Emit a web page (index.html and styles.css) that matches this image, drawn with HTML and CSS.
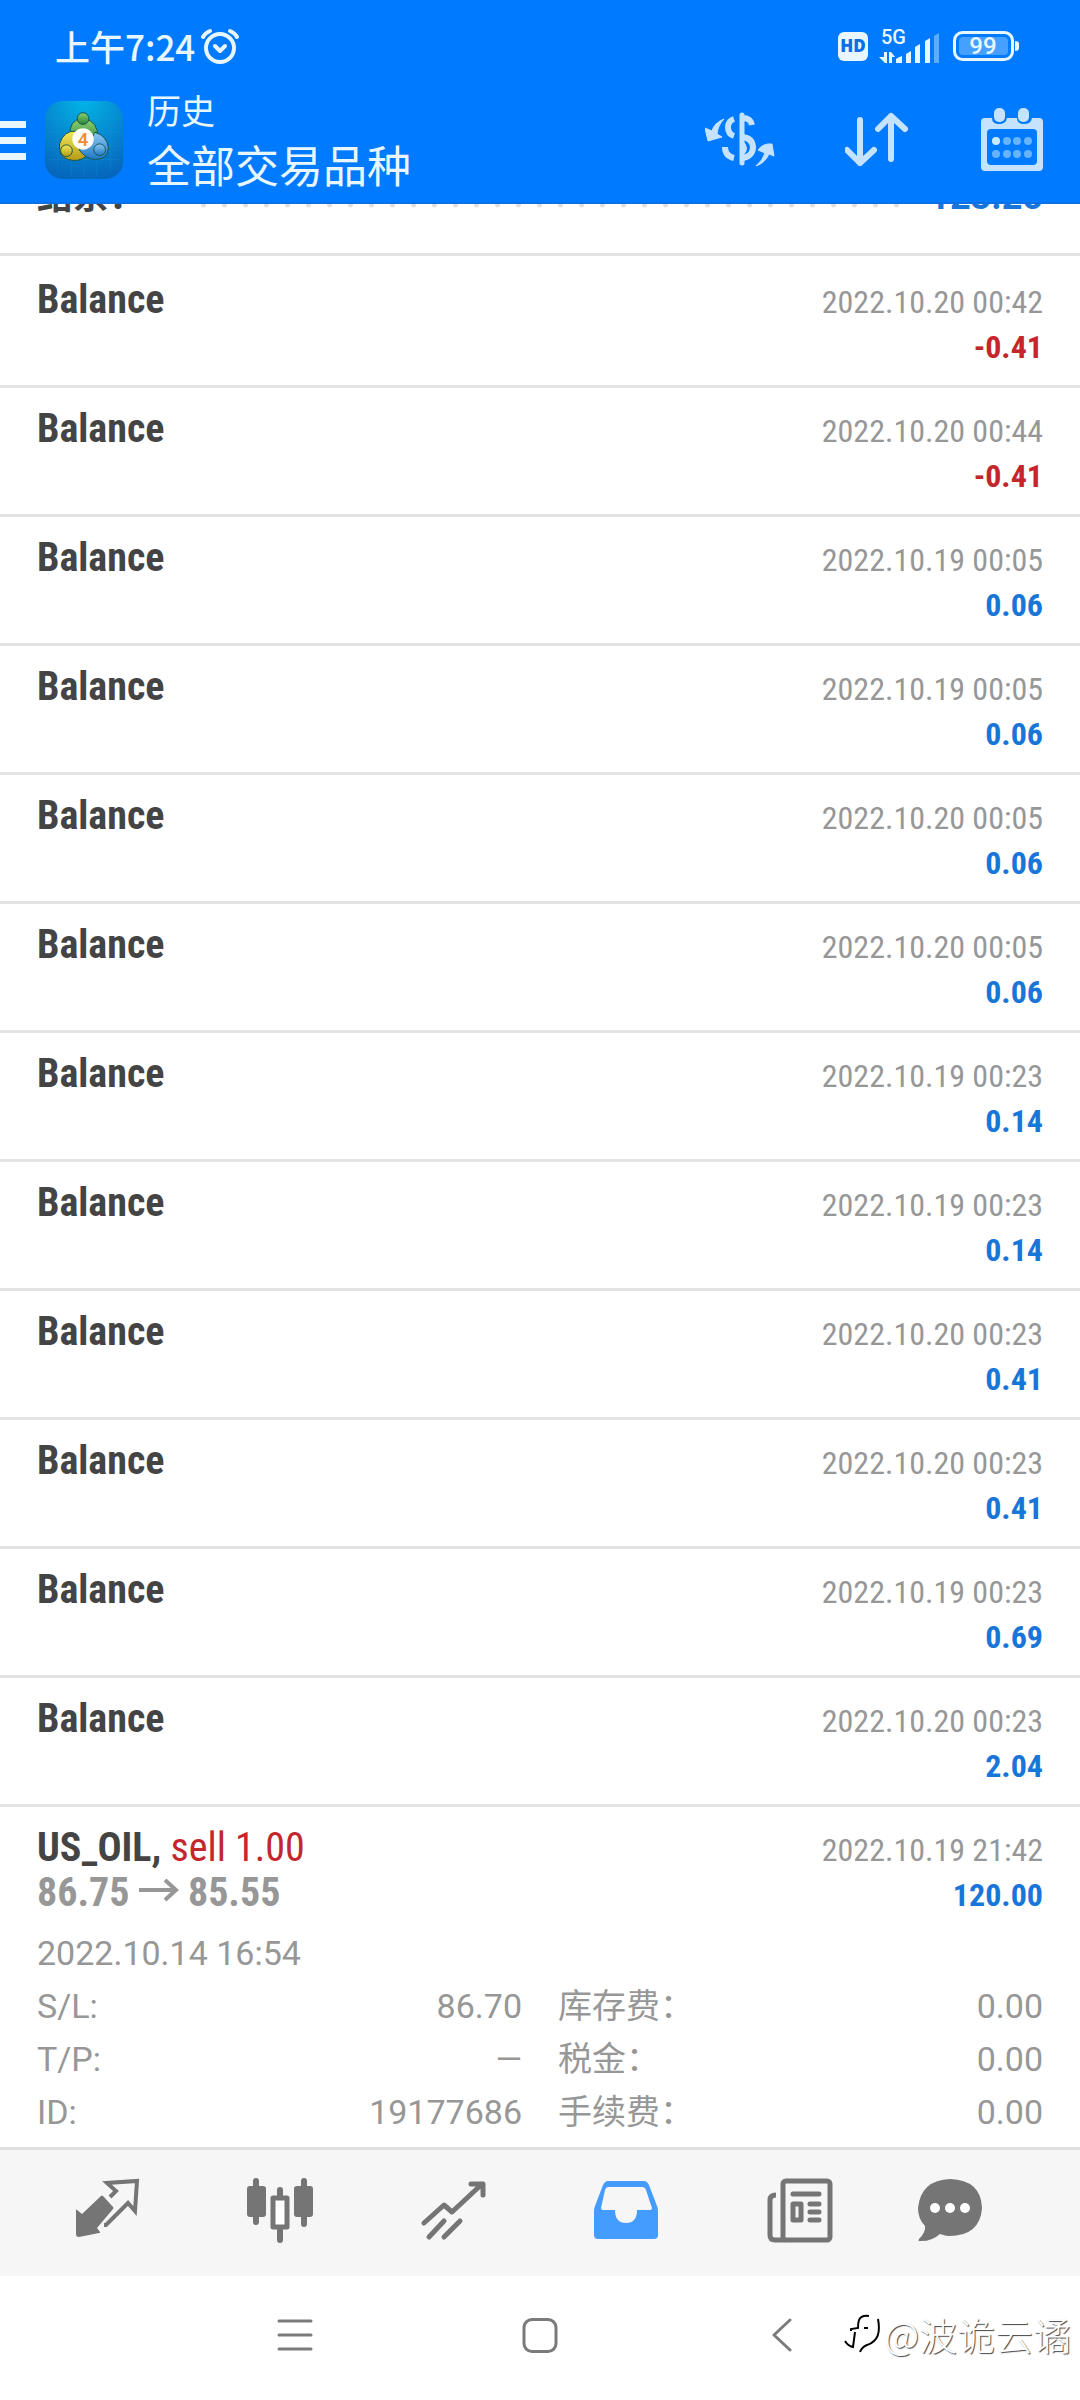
FILE: index.html
```html
<!DOCTYPE html>
<html lang="zh-CN">
<head>
<meta charset="utf-8">
<meta name="viewport" content="width=device-width, initial-scale=1">
<title>历史</title>
<link rel="stylesheet" href="styles.css">
</head>
<body>
<header class="header">
  <div class="status">
    <span class="clock">上午7:24</span>
    <svg class="alarm" width="40" height="38" viewBox="0 0 40 38" fill="none" stroke="currentColor" stroke-width="4" stroke-linecap="round"><circle cx="20" cy="21" r="14"/><path d="M3 10Q5 6 10 4M37 10Q35 6 30 4"/><path d="M15 19l5 5 5-5" stroke-linejoin="round"/></svg>
    <svg class="hd" width="30" height="30" viewBox="0 0 30 30"><rect width="30" height="29" y="1" rx="6" fill="currentColor"/><text x="15" y="21" text-anchor="middle" class="hd-text">HD</text></svg>
    <svg class="signal" width="62" height="42" viewBox="0 -4 62 42" fill="currentColor"><text x="2" y="15" class="signal-text">5G</text><path d="M5 23h3v11h-2l-6-6h5zM10 34V23h2l4 5h-3v6z"/><path d="M17 30q3-2 6-3v7h-6zM27 25l5-3v12h-5zM36 18l5-3v19h-5zM46 12l5-3v25h-5z"/><path d="M55 7l5-3v30h-5z" opacity=".4"/></svg>
    <svg class="battery" width="68" height="32" viewBox="0 0 68 32"><rect x="1.500" y="2.500" width="58" height="27" rx="8" fill="none" stroke="currentColor" stroke-width="3"/><rect x="6" y="7" width="49" height="18" rx="4" fill="currentColor" opacity=".3"/><path d="M62 11q4 0 4 3v4q0 3-4 3z" fill="currentColor"/><text x="30" y="24" text-anchor="middle" class="battery-text">99</text></svg>
  </div>
  <div class="toolbar">
    <button class="icon-button menu" aria-label="菜单"><svg width="26" height="40" viewBox="0 0 26 40" fill="currentColor"><path d="M0 1h26v7H0zM0 17h26v7H0zM0 33h26v7H0z"/></svg></button>
    <svg class="app-icon" width="78" height="78" viewBox="0 0 80 80">
      <defs>
        <radialGradient id="tile" cx=".5" cy="0" r="1"><stop offset="0" stop-color="#02b4e6"/><stop offset=".5" stop-color="#068ad2"/><stop offset="1" stop-color="#0567bb"/></radialGradient>
        <linearGradient id="green" x2="0" y2="1"><stop stop-color="#8fd070"/><stop offset="1" stop-color="#258336"/></linearGradient>
        <linearGradient id="yellow" x2="0" y2="1"><stop stop-color="#f3e85a"/><stop offset="1" stop-color="#b49a16"/></linearGradient>
        <linearGradient id="blue" x2="0" y2="1"><stop stop-color="#8cc9f5"/><stop offset="1" stop-color="#1f78c4"/></linearGradient>
      </defs>
      <rect width="80" height="80" rx="18" fill="url(#tile)"/>
      <path d="M13 8v64M27 3v74M40 2v76M53 3v74M67 8v64M4 18h72M2 32h76M2 46h76M4 60h72" stroke="#35b4e8" stroke-opacity=".15"/>
      <g stroke="#17544c"><path d="M26 35Q24 19 39 18Q55 20 54 38L44 46L34 34Z" fill="url(#green)"/><path d="M32 31Q19 30 15 44Q13 57 24 60Q34 63 42 57L34 47Z" fill="url(#yellow)"/><path d="M51 32Q64 36 65 48Q64 60 52 60Q42 60 35 50L46 44Z" fill="url(#blue)"/><circle cx="39" cy="18" r="6" fill="url(#green)"/><circle cx="22" cy="51" r="6" fill="url(#yellow)"/><circle cx="56" cy="50" r="6" fill="url(#blue)"/></g>
      <circle cx="39" cy="39" r="11" fill="#fffdf6"/><text x="39" y="46" text-anchor="middle" class="app-icon-text">4</text>
    </svg>
    <h1 class="titles"><span class="section">历史</span><span class="filter">全部交易品种</span></h1>
    <button class="icon-button" aria-label="货币"><svg width="70" height="64" viewBox="0 0 70 64" fill="none" stroke="currentColor" stroke-width="5"><path d="M37 7v48" stroke-linecap="round"/><path d="M29 11Q23 13 23 19Q23 26 29 28M29 50Q20 48 20 39M37 10Q46 10 47 17M37 29Q48 30 48 40Q47 49 37 50" stroke-width="6"/><path d="M38 35q5 6 0 10" stroke-width="3"/><path d="M19 11Q9 15 7 23L0 20L3 33L17 29L12 26Q13 17 19 11ZM51 58Q58 52 60 45L53 42Q58 35 67 36L69 48L64 46Q60 55 51 58Z" fill="currentColor" stroke="currentColor" stroke-width="1" stroke-linejoin="round"/></svg></button>
    <button class="icon-button" aria-label="排序"><svg width="66" height="64" viewBox="0 0 66 64" fill="none" stroke="currentColor" stroke-width="6" stroke-linecap="round" stroke-linejoin="round"><path d="M15 12v43M2 42l13 13 14-13M46 51V8M33 21L46 8l14 13"/></svg></button>
    <button class="icon-button" aria-label="日期"><svg width="62" height="64" viewBox="0 0 62 64"><path fill="currentColor" fill-rule="evenodd" d="M4 10H11Q11 16 18 16T26 10H36Q36 16 43 16T51 10H58Q62 10 62 14V59Q62 63 58 63H4Q0 63 0 59V14Q0 10 4 10ZM10 21Q6 21 6 25V53Q6 57 10 57H52Q56 57 56 53V25Q56 21 52 21Z"/><rect x="13" width="11" height="14" rx="5" fill="currentColor"/><rect x="37" width="11" height="14" rx="5" fill="currentColor"/><circle cx="15" cy="33" r="4" fill="#cbecff"/><g fill="#66b3ff"><circle cx="26" cy="33" r="4"/><circle cx="36" cy="33" r="4"/><circle cx="47" cy="33" r="4"/><circle cx="15" cy="46" r="4"/><circle cx="26" cy="46" r="4"/><circle cx="36" cy="46" r="4"/><circle cx="47" cy="46" r="4"/></g></svg></button>
  </div>
</header>

<main class="history">
  <div class="summary"><span>结余：</span><span class="leader"></span><span class="gain">123.25</span></div>
  <ul class="deals">
    <li class="deal"><p class="line"><strong>Balance</strong><time class="date">2022.10.20 00:42</time></p><p class="line"><b class="value loss">-0.41</b></p></li>
    <li class="deal"><p class="line"><strong>Balance</strong><time class="date">2022.10.20 00:44</time></p><p class="line"><b class="value loss">-0.41</b></p></li>
    <li class="deal"><p class="line"><strong>Balance</strong><time class="date">2022.10.19 00:05</time></p><p class="line"><b class="value gain">0.06</b></p></li>
    <li class="deal"><p class="line"><strong>Balance</strong><time class="date">2022.10.19 00:05</time></p><p class="line"><b class="value gain">0.06</b></p></li>
    <li class="deal"><p class="line"><strong>Balance</strong><time class="date">2022.10.20 00:05</time></p><p class="line"><b class="value gain">0.06</b></p></li>
    <li class="deal"><p class="line"><strong>Balance</strong><time class="date">2022.10.20 00:05</time></p><p class="line"><b class="value gain">0.06</b></p></li>
    <li class="deal"><p class="line"><strong>Balance</strong><time class="date">2022.10.19 00:23</time></p><p class="line"><b class="value gain">0.14</b></p></li>
    <li class="deal"><p class="line"><strong>Balance</strong><time class="date">2022.10.19 00:23</time></p><p class="line"><b class="value gain">0.14</b></p></li>
    <li class="deal"><p class="line"><strong>Balance</strong><time class="date">2022.10.20 00:23</time></p><p class="line"><b class="value gain">0.41</b></p></li>
    <li class="deal"><p class="line"><strong>Balance</strong><time class="date">2022.10.20 00:23</time></p><p class="line"><b class="value gain">0.41</b></p></li>
    <li class="deal"><p class="line"><strong>Balance</strong><time class="date">2022.10.19 00:23</time></p><p class="line"><b class="value gain">0.69</b></p></li>
    <li class="deal"><p class="line"><strong>Balance</strong><time class="date">2022.10.20 00:23</time></p><p class="line"><b class="value gain">2.04</b></p></li>
    <li class="deal trade">
      <p class="line"><span><strong>US_OIL,</strong> <span class="loss">sell 1.00</span></span><time class="date">2022.10.19 21:42</time></p>
      <p class="line"><strong class="prices">86.75 <svg class="arrow" role="img" aria-label="→" width="40" height="27" viewBox="0 0 40 27" fill="none" stroke="currentColor" stroke-width="4"><path d="M0 11h38M26 1l11 10-11 10"/></svg> 85.55</strong><b class="value gain">120.00</b></p>
      <div class="details">
        <time>2022.10.14 16:54</time>
        <dl class="fields">
          <div class="field"><dt>S/L:</dt><dd>86.70</dd></div>
          <div class="field"><dt>库存费：</dt><dd>0.00</dd></div>
          <div class="field"><dt>T/P:</dt><dd>—</dd></div>
          <div class="field"><dt>税金：</dt><dd>0.00</dd></div>
          <div class="field"><dt>ID:</dt><dd>19177686</dd></div>
          <div class="field"><dt>手续费：</dt><dd>0.00</dd></div>
        </dl>
      </div>
    </li>
  </ul>
</main>

<nav class="tabs" aria-label="主导航">
  <button class="tab" aria-label="行情"><svg width="70" height="70" viewBox="0 0 70 70" fill="none" stroke="currentColor" stroke-width="4"><path d="M4 32q0-1 1 0l5 4 19-18q1-1 2 0l10 11q1 1 0 2L25 50l3 4q1 1-1 1L7 59q-3 0-3-3z" fill="currentColor" stroke="none"/><path d="M38 19l6-6-9-8 30-2-2 30-7-8-22 22h-2"/></svg></button>
  <button class="tab" aria-label="图表"><svg width="70" height="70" viewBox="0 0 70 70" fill="none" stroke="currentColor" stroke-width="6" stroke-linecap="round"><rect x="2" y="8" width="19" height="31" rx="3" fill="currentColor" stroke="none"/><rect x="49" y="8" width="19" height="31" rx="3" fill="currentColor" stroke="none"/><path d="M11 3v41M59 3v43M35 12v7M35 52v10"/><rect x="28" y="20" width="14" height="29" stroke-width="5" fill="#fff" stroke-linejoin="round"/></svg></button>
  <button class="tab" aria-label="交易"><svg width="70" height="70" viewBox="0 0 70 70" fill="none" stroke="currentColor" stroke-width="5" stroke-linecap="round" stroke-linejoin="round"><path d="M6 45l20-18 8 7L64 6M53 6h12v11M11 59l15-16M26 59l16-16"/></svg></button>
  <button class="tab active" aria-label="历史" aria-current="page"><svg width="70" height="70" viewBox="0 0 70 70"><path fill="currentColor" d="M17 3h36q3 0 5 4l8 21q1 2 1 5v24q0 4-4 4H7q-4 0-4-4V33q0-3 1-5l8-21q2-4 5-4z"/><path fill="#f6f6f6" d="M17 9h34q3 0 4 3l6 18q0 2-2 2H46q0 13-11 13T24 32H12q-2 0-2-2l4-18q1-3 3-3z"/></svg></button>
  <button class="tab" aria-label="新闻"><svg width="70" height="70" viewBox="0 0 70 70" fill="none" stroke="currentColor" stroke-width="5" stroke-linejoin="round"><rect x="19" y="3" width="47" height="59" rx="3"/><path d="M12 17q-6 0-6 5v35q0 5 5 5h10"/><path d="M29 16h26M46 26h9M46 34h9M46 42h9" stroke-linecap="round"/><rect x="29" y="26" width="8" height="16"/></svg></button>
  <button class="tab" aria-label="消息"><svg width="70" height="70" viewBox="0 0 70 70"><path fill="currentColor" d="M35 1q31 1 32 29-2 28-33 28-4 0-9-2-9 8-21 7-1 0 0-2 7-7 6-13-7-7-7-18Q6 2 35 1z"/><g fill="#fff"><circle cx="20" cy="30" r="5"/><circle cx="35" cy="30" r="5"/><circle cx="50" cy="30" r="5"/></g></svg></button>
</nav>

<footer class="system">
  <button class="system-button" aria-label="最近任务"><svg width="36" height="36" viewBox="0 0 36 36" fill="none" stroke="currentColor" stroke-width="3" stroke-linecap="round"><path d="M2 3h32M2 17h32M2 31h32"/></svg></button>
  <button class="system-button" aria-label="主屏幕"><svg width="36" height="36" viewBox="0 0 36 36" fill="none" stroke="currentColor" stroke-width="3"><rect x="2" y="1.500" width="32" height="32" rx="8"/></svg></button>
  <button class="system-button" aria-label="返回"><svg width="36" height="36" viewBox="0 0 36 36" fill="none" stroke="currentColor" stroke-width="3" stroke-linecap="round" stroke-linejoin="round"><path d="M23 2L7 17l16 15"/></svg></button>
  <span class="watermark"><svg width="40" height="42" viewBox="0 0 40 42" fill="none" stroke="#000" stroke-width="2"><path d="M27 3q-8-1-10 4-1 3-1 8l-7 1v2M13 19l-2 15q-5-1-8-6M22 15h4M36 6q3 16-4 22-3 3-7 4-5 2-7 7"/></svg>@波诡云谲</span>
</footer>
</body>
</html>
```
FILE: styles.css
```css
* {
  box-sizing: border-box;
  margin: 0;
  padding: 0;
}

body {
  display: flex;
  flex-direction: column;
  min-height: 100vh;
  background: #fff;
  color: #444;
  font-family: Roboto, "Noto Sans CJK SC", sans-serif;
  font-size: 34px;
}

button {
  border: 0;
  background: none;
  color: inherit;
}

svg {
  display: block;
  flex: none;
}

ul {
  list-style: none;
}

/* Header */
.header {
  background: #007aff;
  border-bottom: 2px solid #0b6fe8;
  color: #e8f7ff;
}

.status {
  display: flex;
  align-items: center;
  height: 92px;
  padding: 0 59px 0 55px;
}

.clock {
  font-family: "Noto Sans CJK SC", sans-serif;
  font-size: 35px;
  font-weight: 500;
  line-height: 50px;
}

.alarm {
  margin-left: 5px;
}

.hd {
  margin-left: auto;
}

.signal {
  margin: 0 12px 0 11px;
}

.hd-text {
  fill: #0a6fe0;
  font: 800 17px "Open Sans", sans-serif;
}

.signal-text {
  font: 500 20px Roboto, sans-serif;
}

.battery-text {
  fill: currentColor;
  font: 500 24px Roboto, sans-serif;
}

.toolbar {
  display: flex;
  align-items: center;
  height: 110px;
  padding: 0 37px 14px 0;
}

.app-icon {
  margin: 0 24px 0 19px;
}

.app-icon-text {
  fill: #ee8a35;
  font: 500 19px Roboto, sans-serif;
}

.titles {
  display: flex;
  flex: 1;
  flex-direction: column;
  font-family: "Noto Sans CJK SC", sans-serif;
  font-weight: 400;
}

.section {
  font-size: 34px;
  line-height: 48px;
}

.filter {
  font-size: 44px;
  line-height: 60px;
}

.icon-button {
  flex: none;
  margin-left: 70px;
  color: #c5e3ff;
}

.menu {
  margin: 0;
  color: #e8f7ff;
}

/* Deal list */
.history {
  flex: 1;
}

.summary {
  display: flex;
  align-items: flex-end;
  height: 49px;
  padding: 0 37px 33px;
  overflow: hidden;
  font-size: 36px;
  font-weight: 700;
  line-height: 45px;
}

.leader {
  flex: 1;
  height: 20px;
  margin: 0 25px 0 48px;
  background: radial-gradient(circle, #e0e0e0 2px, transparent 3px) 0 0 / 21px 10px repeat-x;
}

.deal {
  padding: 18px 37px;
  border-top: 3px solid #e3e3e3;
  font-family: "Roboto Condensed", Roboto, sans-serif;
  font-size: 40px;
}

.deal:first-child {
  padding-top: 21px;
}

.line {
  display: flex;
  align-items: baseline;
  height: 45px;
  line-height: 45px;
}

.line::before {
  content: "\200b";
}

.date,
.value {
  margin-left: auto;
  font-size: 32px;
}

.date,
.prices,
.details {
  color: #979797;
}

.gain {
  color: #1976d8;
}

.loss {
  color: #c5262b;
}

.arrow {
  display: inline-block;
  vertical-align: baseline;
}

.trade {
  padding-bottom: 8px;
}

.details {
  margin-top: 12px;
  font-family: Roboto, "Noto Sans CJK SC", sans-serif;
  font-size: 34px;
  line-height: 53px;
}

.details time {
  display: block;
}

.fields {
  display: grid;
  grid-template-columns: 1fr 1fr;
  column-gap: 36px;
}

.field {
  display: flex;
  justify-content: space-between;
  height: 53px;
}

/* Bottom tabs */
.tabs {
  display: flex;
  height: 129px;
  padding: 0 65px 0 20px;
  border-top: 3px solid #e0e0e0;
  background: #f6f6f6;
  color: #757575;
}

.tab {
  display: flex;
  flex: 4;
  align-items: center;
  justify-content: center;
}

.tab:last-child {
  flex: 3;
}

.active {
  color: #449cff;
}

/* System navigation */
.system {
  position: relative;
  display: flex;
  align-items: center;
  justify-content: center;
  gap: 189px;
  height: 124px;
  padding-bottom: 5px;
  color: #7b7b7b;
}

.system-button {
  padding: 10px;
}

.watermark {
  position: absolute;
  right: 9px;
  bottom: 42px;
  display: flex;
  align-items: center;
  gap: 2px;
  color: #fff;
  font-family: "Noto Sans CJK SC", sans-serif;
  font-size: 38px;
  font-weight: 300;
  line-height: 48px;
  text-shadow: 1px 1px 1px #444;
}
```
